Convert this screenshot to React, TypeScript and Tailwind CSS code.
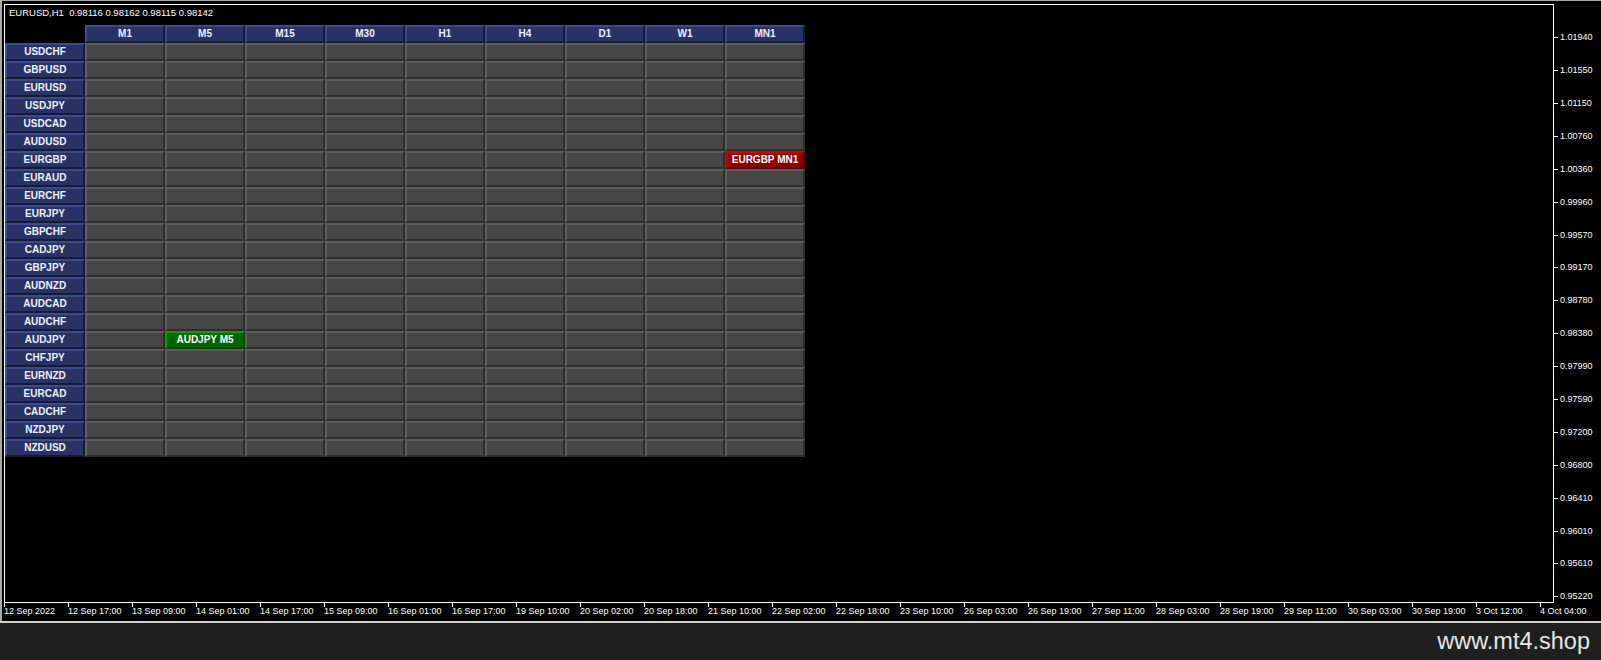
import React from 'react'

const timeframes = ['M1', 'M5', 'M15', 'M30', 'H1', 'H4', 'D1', 'W1', 'MN1']

const symbols = [
  'USDCHF', 'GBPUSD', 'EURUSD', 'USDJPY', 'USDCAD', 'AUDUSD', 'EURGBP', 'EURAUD',
  'EURCHF', 'EURJPY', 'GBPCHF', 'CADJPY', 'GBPJPY', 'AUDNZD', 'AUDCAD', 'AUDCHF',
  'AUDJPY', 'CHFJPY', 'EURNZD', 'EURCAD', 'CADCHF', 'NZDJPY', 'NZDUSD',
]

// active signals: symbol -> timeframe + direction
const signals: Record<string, { tf: string; dir: 'buy' | 'sell' }> = {
  EURGBP: { tf: 'MN1', dir: 'sell' },
  AUDJPY: { tf: 'M5', dir: 'buy' },
}

const prices = [
  '1.01940', '1.01550', '1.01150', '1.00760', '1.00360', '0.99960', '0.99570', '0.99170', '0.98780',
  '0.98380', '0.97990', '0.97590', '0.97200', '0.96800', '0.96410', '0.96010', '0.95610', '0.95220',
]

const times = [
  '12 Sep 2022', '12 Sep 17:00', '13 Sep 09:00', '14 Sep 01:00', '14 Sep 17:00', '15 Sep 09:00',
  '16 Sep 01:00', '16 Sep 17:00', '19 Sep 10:00', '20 Sep 02:00', '20 Sep 18:00', '21 Sep 10:00',
  '22 Sep 02:00', '22 Sep 18:00', '23 Sep 10:00', '26 Sep 03:00', '26 Sep 19:00', '27 Sep 11:00',
  '28 Sep 03:00', '28 Sep 19:00', '29 Sep 11:00', '30 Sep 03:00', '30 Sep 19:00', '3 Oct 12:00',
  '4 Oct 04:00',
]

const navyCell =
  'flex items-center justify-center border-2 border-t-[#3c4a8e] border-l-[#3c4a8e] border-b-[#141a3a] border-r-[#141a3a] bg-[#283264] text-[10px] font-bold text-[#eef2ff] leading-none'

const GridCell = ({ symbol, tf }: { symbol: string; tf: string }) => {
  const sig = signals[symbol]
  if (sig && sig.tf === tf) {
    const cls =
      sig.dir === 'buy'
        ? 'border-t-[#00a000] border-l-[#00a000] border-b-[#004a00] border-r-[#004a00] bg-[#006400]'
        : 'border-t-[#d00000] border-l-[#d00000] border-b-[#5a0000] border-r-[#5a0000] bg-[#8b0000]'
    return (
      <div className={`flex items-center justify-center border-2 ${cls} text-[10px] font-bold leading-none text-white`}>
        {symbol} {tf}
      </div>
    )
  }
  return <div className="border-2 border-t-[#5e5e5e] border-l-[#5e5e5e] border-b-[#2d2d2d] border-r-[#2d2d2d] bg-[#464646]" />
}

export default function App() {
  return (
    <div className="flex h-[660px] w-[1601px] flex-col overflow-hidden bg-black font-['Liberation_Sans',Arial,sans-serif] text-white">
      {/* chart window */}
      <div className="flex h-[621px] shrink-0 flex-col border-l-2 border-t border-[#a8a8a8] pl-[2px] pt-[3px]">
        <div className="flex h-[599px] shrink-0">
          {/* chart frame */}
          <div className="h-[599px] w-[1550px] shrink-0 border border-white">
            <div className="pb-[5px] pl-[4px] pt-[1px] text-[9.5px] leading-[14px]">
              EURUSD,H1&nbsp;&nbsp;0.98116 0.98162 0.98115 0.98142
            </div>

            <div className="grid grid-cols-[80px_repeat(9,80px)] grid-rows-[repeat(24,18px)]">
              <div />
              {timeframes.map((tf) => (
                <div key={tf} className={navyCell}>
                  {tf}
                </div>
              ))}
              {symbols.map((s) => (
                <React.Fragment key={s}>
                  <div className={navyCell}>{s}</div>
                  {timeframes.map((tf) => (
                    <GridCell key={tf} symbol={s} tf={tf} />
                  ))}
                </React.Fragment>
              ))}
            </div>
          </div>

          {/* price scale */}
          <div className="flex h-[599px] flex-col pt-[17.25px] text-[9px]">
            {prices.map((p) => (
              <div key={p} className="flex h-[32.9px] shrink-0 items-center">
                <div className="h-px w-[4px] bg-white" />
                <span className="ml-[2px] leading-none">{p}</span>
              </div>
            ))}
          </div>
        </div>

        {/* time scale */}
        <div className="flex">
          {times.map((t) => (
            <div key={t} className="flex w-[64px] shrink-0 flex-col">
              <div className="h-[4px] w-px bg-white" />
              <span className="-mt-px whitespace-nowrap text-[9px] leading-[11px]">{t}</span>
            </div>
          ))}
        </div>
      </div>

      <div className="h-[2px] shrink-0 bg-[#cfcfcf]" />

      <div className="flex h-[37px] shrink-0 items-center justify-end bg-[#1f1f1f] pr-[11px]">
        <span className="text-[23.5px] leading-none text-[#e6e6e6]">www.mt4.shop</span>
      </div>
    </div>
  )
}
